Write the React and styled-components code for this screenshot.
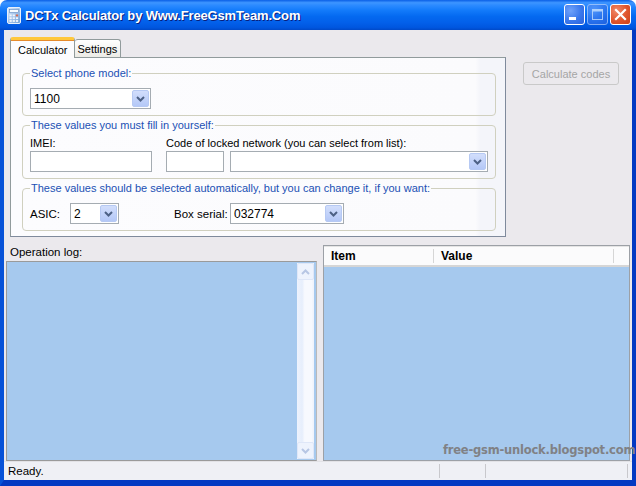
import React from 'react'
import styled, { createGlobalStyle, css } from 'styled-components'

const GlobalStyle = createGlobalStyle`
  html, body {
    margin: 0;
    padding: 0;
    background: #ffffff;
  }
  * {
    box-sizing: border-box;
  }
`

const Window = styled.div`
  position: relative;
  width: 636px;
  height: 486px;
  display: flex;
  flex-direction: column;
  font-family: "Liberation Sans", Arial, sans-serif;
  font-size: 11px;
  color: #000;
  overflow: hidden;
`

const TitleBar = styled.div`
  height: 30px;
  flex: none;
  display: flex;
  align-items: center;
  padding: 0 5px 0 6px;
  border-radius: 7px 7px 0 0;
  background: linear-gradient(to bottom,
    #0a5fe6 0%, #3d95ff 9%, #2b8aff 18%, #127afa 35%,
    #0469f0 55%, #0360ea 75%, #0056df 92%, #0049c8 100%);
`

const TitleText = styled.span`
  margin-left: 3px;
  font-family: "Liberation Sans", Arial, sans-serif;
  font-weight: bold;
  font-size: 13px;
  color: #fff;
  text-shadow: 1px 1px 0 #0a1e7a;
  letter-spacing: -0.15px;
`

const CaptionButtons = styled.div`
  margin-left: auto;
  display: flex;
  gap: 2px;
  margin-top: -1px;
`

const CaptionButton = styled.div`
  width: 21px;
  height: 21px;
  border: 1px solid #fff;
  border-radius: 3px;
  display: flex;
  align-items: center;
  justify-content: center;
  ${({ $variant }) => $variant === 'close' ? css`
    background: radial-gradient(circle at 30% 30%, #f0896a 0%, #e0552c 55%, #cc4119 100%);
  ` : css`
    background: radial-gradient(circle at 30% 30%, #6fa2fa 0%, #3a78ec 55%, #2a62dc 100%);
  `}
  ${({ $disabled }) => $disabled && css`
    opacity: 0.65;
    border-color: #c7d8fa;
  `}
`

const Frame = styled.div`
  flex: 1;
  display: flex;
  flex-direction: column;
  background: #ebe9ed;
  border-style: solid;
  border-width: 0 4px 6px 4px;
  border-left-color: #0752d8;
  border-right-color: #0339c2;
  border-bottom-color: #0339c2;
`

const TopSection = styled.div`
  display: flex;
  align-items: flex-start;
  padding: 7px 0 0 6px;
`

const TabControl = styled.div`
  width: 496px;
  display: flex;
  flex-direction: column;
`

const TabStrip = styled.div`
  height: 20px;
  display: flex;
  align-items: flex-end;
  position: relative;
  z-index: 1;
`

const Tab = styled.div`
  display: flex;
  align-items: center;
  justify-content: center;
  border: 1px solid #919b9c;
  border-bottom: none;
  border-radius: 3px 3px 0 0;
  ${({ $active }) => $active ? css`
    height: 21px;
    margin-bottom: -1px;
    padding: 2px 6px 0 7px;
    background: #fcfcfe;
    border-top: 3px solid #ffc83c;
    box-shadow: inset 0 1px 0 #e68b2c;
  ` : css`
    height: 18px;
    padding: 1px 3px 0 3px;
    background: linear-gradient(to bottom, #ffffff, #ecebe6);
    border-left: none;
  `}
`

const TabPanel = styled.div`
  height: 180px;
  border: 1px solid #919b9c;
  border-right-color: #7f8a9c;
  border-bottom-color: #7f8a9c;
  background: linear-gradient(to right, #fcfcfe 0%, #fbfbfd 94%, #f4f5fa 95%, #f4f5fa 100%);
  padding: 9px 9px 0 11px;
  display: flex;
  flex-direction: column;
  gap: 3px;
`

const GroupBox = styled.fieldset`
  margin: 0;
  padding: 8px 7px 6px 7px;
  border: 1px solid #d0d0bf;
  border-radius: 4px;
  min-width: 0;
`

const Legend = styled.legend`
  padding: 0 1px;
  margin-left: 0;
  color: #2150b4;
  line-height: 13px;
  font-size: 11px;
`

const FillRow = styled.div`
  display: flex;
  gap: 14px;
`

const Field = styled.div`
  display: flex;
  flex-direction: column;
  gap: 1px;
  margin-top: -3px;
`

const Label = styled.span`
  line-height: 13px;
  white-space: nowrap;
`

const InlineRow = styled.div`
  display: flex;
  gap: 6px;
`

const TextInput = styled.div`
  width: ${({ $width }) => $width}px;
  height: 21px;
  background: #fff;
  border: 1px solid #a5acb2;
`

const SelectBox = styled.div`
  width: ${({ $width }) => $width}px;
  height: 21px;
  background: #fff;
  border: 1px solid #a5acb2;
  padding: 1px;
  display: flex;
  align-items: center;
`

const SelectValue = styled.span`
  padding-left: 2px;
  font-size: 12px;
  flex: 1;
`

const DropButton = styled.div`
  width: 17px;
  height: 100%;
  border: 1px solid #b6c9f3;
  border-radius: 2px;
  background: linear-gradient(to bottom, #d2defc, #b4c8f7);
  display: flex;
  align-items: center;
  justify-content: center;
`

const AutoRow = styled.div`
  display: flex;
  align-items: center;
`

const RowLabel = styled.span`
  width: ${({ $width }) => $width}px;
  margin-left: ${({ $offset }) => $offset || 0}px;
  flex: none;
  font-size: 11.5px;
`

const CalcButton = styled.div`
  margin: 25px 0 0 17px;
  width: 96px;
  height: 23px;
  border: 1px solid #c9c9c9;
  border-radius: 3px;
  display: flex;
  align-items: center;
  justify-content: center;
  color: #a5a5a5;
  background: #ebe9ed;
`

const BottomSection = styled.div`
  flex: 1;
  display: flex;
  gap: 6px;
  padding: 0 2px;
  margin-top: 8px;
`

const LogColumn = styled.div`
  width: 311px;
  display: flex;
  flex-direction: column;
`

const LogLabel = styled.span`
  line-height: 13px;
  margin: 1px 0 2px 4px;
  font-size: 11.5px;
`

const LogBox = styled.div`
  flex: 1;
  display: flex;
  border: 1px solid #9a9a9a;
  border-right-color: #b9b9b9;
  background: #a6c9ee;
  padding: 1px 2px 1px 0;
`

const LogContent = styled.div`
  flex: 1;
`

const ScrollBar = styled.div`
  width: 17px;
  display: flex;
  flex-direction: column;
  background: linear-gradient(to right, #eef3fd 0%, #e6eefc 30%, #f7f9fe 45%, #f7f9fe 85%, #eef2fb 100%);
`

const ScrollArrow = styled.div`
  height: 17px;
  border: 1px solid #dfe7f8;
  border-radius: 2px;
  background: #eef3fd;
  display: flex;
  align-items: center;
  justify-content: center;
`

const ScrollTrack = styled.div`
  flex: 1;
`

const ListView = styled.div`
  flex: 1;
  display: flex;
  flex-direction: column;
  border: 1px solid #9ca0a6;
  background: #a6c9ee;
`

const ListHeader = styled.div`
  height: 21px;
  display: flex;
  background: #fbfbfc;
  border-bottom: 2px solid #d6d6d6;
  box-shadow: 0 1px 0 #e4e4e4 inset;
`

const HeaderCell = styled.div`
  width: ${({ $width }) => $width ? `${$width}px` : 'auto'};
  flex: ${({ $width }) => $width ? 'none' : 1};
  display: flex;
  align-items: center;
  padding-left: 7px;
  font-weight: bold;
  font-size: 12px;
  border-right: ${({ $last }) => $last ? 'none' : '1px solid #d6d6d6'};
  margin: 3px 0 2px 0;
`

const StatusBar = styled.div`
  height: 19px;
  flex: none;
  display: flex;
  align-items: center;
  background: #eff0f5;
  border-top: 1px solid #e2e2e6;
`

const StatusPane = styled.div`
  width: ${({ $width }) => $width ? `${$width}px` : 'auto'};
  flex: ${({ $width }) => $width ? 'none' : 1};
  height: 14px;
  display: flex;
  align-items: center;
  padding-left: 4px;
  font-size: 11.5px;
  border-right: ${({ $bar }) => $bar ? '1px solid #c8c8cc' : 'none'};
`

const Watermark = styled.span`
  position: absolute;
  left: 443px;
  top: 443px;
  font-family: "DejaVu Sans", Verdana, sans-serif;
  font-weight: bold;
  font-size: 11.5px;
  color: #808185;
  letter-spacing: -0.2px;
`

function Chevron ({ color = '#4d6185', up }) {
  return (
    <svg width='9' height='6' viewBox='0 0 9 6'>
      <polyline
        points={up ? '1,5 4.5,1.5 8,5' : '1,1 4.5,4.5 8,1'}
        fill='none'
        stroke={color}
        strokeWidth='2'
      />
    </svg>
  )
}

function Select ({ value, width }) {
  return (
    <SelectBox $width={width}>
      <SelectValue>{value}</SelectValue>
      <DropButton><Chevron /></DropButton>
    </SelectBox>
  )
}

function AppIcon () {
  return (
    <svg width='16' height='17' viewBox='0 0 16 17'>
      <defs>
        <linearGradient id='calc' x1='0' y1='0' x2='1' y2='1'>
          <stop offset='0' stopColor='#dbe9fb' />
          <stop offset='1' stopColor='#6d9fd8' />
        </linearGradient>
      </defs>
      <rect x='1.5' y='0.5' width='13' height='16' rx='1.5' fill='url(#calc)' stroke='#e8f0fb' />
      <rect x='3.5' y='2.5' width='9' height='3' fill='#f6fbff' stroke='#5d87c0' strokeWidth='0.6' />
      {[0, 1, 2].map(r => [0, 1, 2].map(c => (
        <rect key={`${r}-${c}`} x={3.5 + c * 3.2} y={7.5 + r * 2.8} width='2.2' height='1.8' fill={c === 2 && r === 0 ? '#e06a4a' : '#f2f6fc'} />
      )))}
    </svg>
  )
}

export default function App () {
  return (
    <Window>
      <GlobalStyle />
      <TitleBar>
        <AppIcon />
        <TitleText>DCTx Calculator by Www.FreeGsmTeam.Com</TitleText>
        <CaptionButtons>
          <CaptionButton>
            <svg width='19' height='19' viewBox='0 0 19 19'>
              <rect x='4' y='12' width='7' height='3' fill='#fff' />
            </svg>
          </CaptionButton>
          <CaptionButton $disabled>
            <svg width='19' height='19' viewBox='0 0 19 19'>
              <rect x='4.5' y='4.5' width='10' height='10' fill='none' stroke='#fff' />
              <rect x='4' y='4' width='11' height='2.5' fill='#fff' />
            </svg>
          </CaptionButton>
          <CaptionButton $variant='close'>
            <svg width='19' height='19' viewBox='0 0 19 19'>
              <path d='M5 5 L14 14 M14 5 L5 14' stroke='#fff' strokeWidth='2.2' strokeLinecap='square' />
            </svg>
          </CaptionButton>
        </CaptionButtons>
      </TitleBar>

      <Frame>
        <TopSection>
          <TabControl>
            <TabStrip>
              <Tab $active>Calculator</Tab>
              <Tab>Settings</Tab>
            </TabStrip>
            <TabPanel>
              <GroupBox>
                <Legend>Select phone model:</Legend>
                <Select value='1100' width={121} />
              </GroupBox>

              <GroupBox>
                <Legend>These values you must fill in yourself:</Legend>
                <FillRow>
                  <Field>
                    <Label>IMEI:</Label>
                    <TextInput $width={122} />
                  </Field>
                  <Field>
                    <Label>Code of locked network (you can select from list):</Label>
                    <InlineRow>
                      <TextInput $width={58} />
                      <Select width={258} />
                    </InlineRow>
                  </Field>
                </FillRow>
              </GroupBox>

              <GroupBox>
                <Legend>These values should be selected automatically, but you can change it, if you want:</Legend>
                <AutoRow>
                  <RowLabel $width={40}>ASIC:</RowLabel>
                  <Select value='2' width={49} />
                  <RowLabel $width={56} $offset={55}>Box serial:</RowLabel>
                  <Select value='032774' width={114} />
                </AutoRow>
              </GroupBox>
            </TabPanel>
          </TabControl>
          <CalcButton>Calculate codes</CalcButton>
        </TopSection>

        <BottomSection>
          <LogColumn>
            <LogLabel>Operation log:</LogLabel>
            <LogBox>
              <LogContent />
              <ScrollBar>
                <ScrollArrow><Chevron color='#b7c6e4' up /></ScrollArrow>
                <ScrollTrack />
                <ScrollArrow><Chevron color='#b7c6e4' /></ScrollArrow>
              </ScrollBar>
            </LogBox>
          </LogColumn>
          <ListView>
            <ListHeader>
              <HeaderCell $width={110}>Item</HeaderCell>
              <HeaderCell $width={180}>Value</HeaderCell>
              <HeaderCell $last />
            </ListHeader>
          </ListView>
        </BottomSection>

        <StatusBar>
          <StatusPane $width={436} $bar>Ready.</StatusPane>
          <StatusPane $width={46} $bar />
          <StatusPane $width={142} $bar />
          <StatusPane />
        </StatusBar>
      </Frame>

      <Watermark>free-gsm-unlock.blogspot.com</Watermark>
    </Window>
  )
}
